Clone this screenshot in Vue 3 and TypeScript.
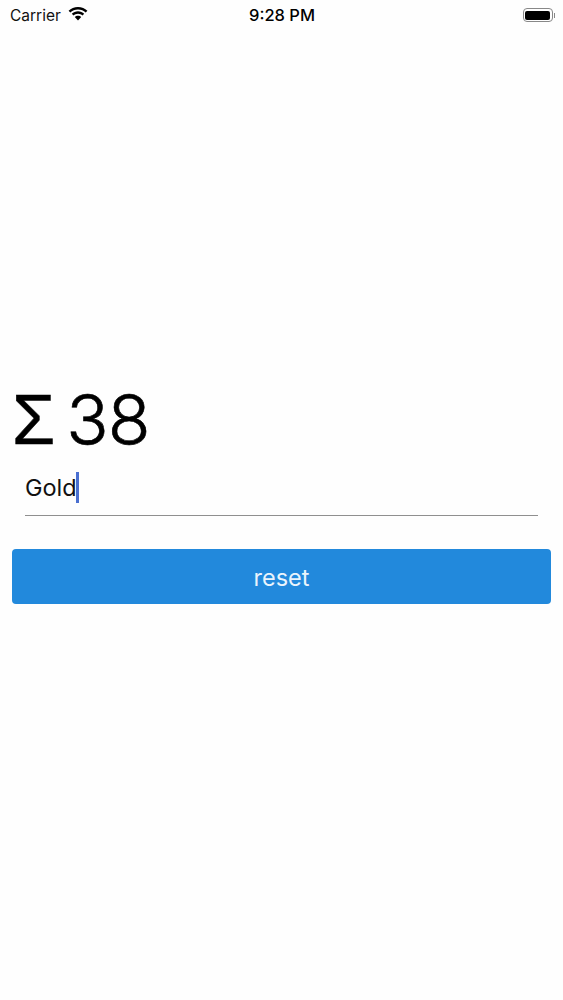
<script setup lang="ts">
const total: number = 38
const word: string = 'Gold'
</script>

<template>
  <div class="screen">
    <header class="status">
      <div class="side">
        <span class="carrier">Carrier</span>
        <svg class="wifi" viewBox="0 0 20 15" width="20" height="15">
          <path d="M10 1C6.3 1 3 2.4.6 4.7l1.7 1.8C4.3 4.6 7 3.4 10 3.4s5.700 1.200 7.700 3.100l1.700-1.800C17 2.400 13.700 1 10 1z" fill="#000"/>
          <path d="M10 5.300c-2.400 0-4.600.9-6.200 2.500l1.700 1.800C6.700 8.500 8.300 7.800 10 7.800s3.300.7 4.500 1.800l1.700-1.800C14.600 6.200 12.400 5.300 10 5.300z" fill="#000"/>
          <path d="M10 9.700c-1.300 0-2.400.5-3.200 1.300L10 14.400l3.200-3.400c-.8-.8-1.900-1.300-3.200-1.300z" fill="#000"/>
        </svg>
      </div>
      <span class="time">9:28 PM</span>
      <div class="side end">
        <span class="battery"><span class="level"></span></span>
        <span class="cap"></span>
      </div>
    </header>
    <main class="content">
      <h1 class="total"><span class="sigma">Σ</span><span class="count">{{ total }}</span></h1>
      <div class="field">
        <span class="value">{{ word }}</span><span class="caret"></span>
      </div>
      <button class="reset" type="button">reset</button>
    </main>
  </div>
</template>

<style scoped>
.screen {
  position: relative;
  width: 563px;
  height: 1000px;
  background: #fefefe;
  display: flex;
  flex-direction: column;
  font-family: Inter, "Liberation Sans", sans-serif;
  color: #000;
  overflow: hidden;
}
.status {
  height: 30px;
  padding: 0 8px 0 10px;
  display: grid;
  grid-template-columns: 1fr auto 1fr;
  align-items: center;
  font-size: 15px;
}
.side {
  display: flex;
  align-items: center;
  gap: 7px;
}
.side.end {
  justify-content: flex-end;
  gap: 1px;
}
.carrier {
  color: #111;
  font-size: 15.5px;
}
.wifi {
  margin-top: -3px;
}
.time {
  font-weight: 500;
  font-size: 16.5px;
  margin-left: -1px;
}
.battery {
  width: 30px;
  height: 14px;
  box-sizing: border-box;
  border: 1px solid #888;
  border-radius: 4px;
  padding: 1.5px;
  display: flex;
}
.level {
  flex: 1;
  background: #000;
  border-radius: 2px;
}
.cap {
  width: 1.5px;
  height: 5px;
  background: #888;
}
.content {
  padding: 350px 12px 0;
  display: flex;
  flex-direction: column;
}
.total {
  margin: 0;
  display: flex;
  gap: 11px;
  font-size: 70px;
  line-height: 80px;
  font-weight: 400;
  font-family: Inter, "Liberation Sans", sans-serif;
}
.sigma {
  font-family: "Liberation Sans", sans-serif;
  -webkit-text-stroke: 0.5px #000;
}
.count {
  font-weight: 300;
  letter-spacing: -1px;
  -webkit-text-stroke: 0.6px #000;
}
.field {
  margin: 0 13px;
  height: 56px;
  box-sizing: border-box;
  border-bottom: 1.5px solid #8f8f8f;
  padding-top: 12px;
  display: flex;
  align-items: flex-start;
  font-size: 23.5px;
  line-height: 32px;
}
.value {
  color: #111;
}
.caret {
  width: 3px;
  height: 31px;
  margin-left: -1px;
  background: #4a6fd0;
}
.reset {
  margin-top: 33px;
  height: 55px;
  border: none;
  border-radius: 4px;
  background: #2289dc;
  color: #eaf4fc;
  font-family: inherit;
  font-size: 23.5px;
  padding: 2px 0 0;
}
</style>
